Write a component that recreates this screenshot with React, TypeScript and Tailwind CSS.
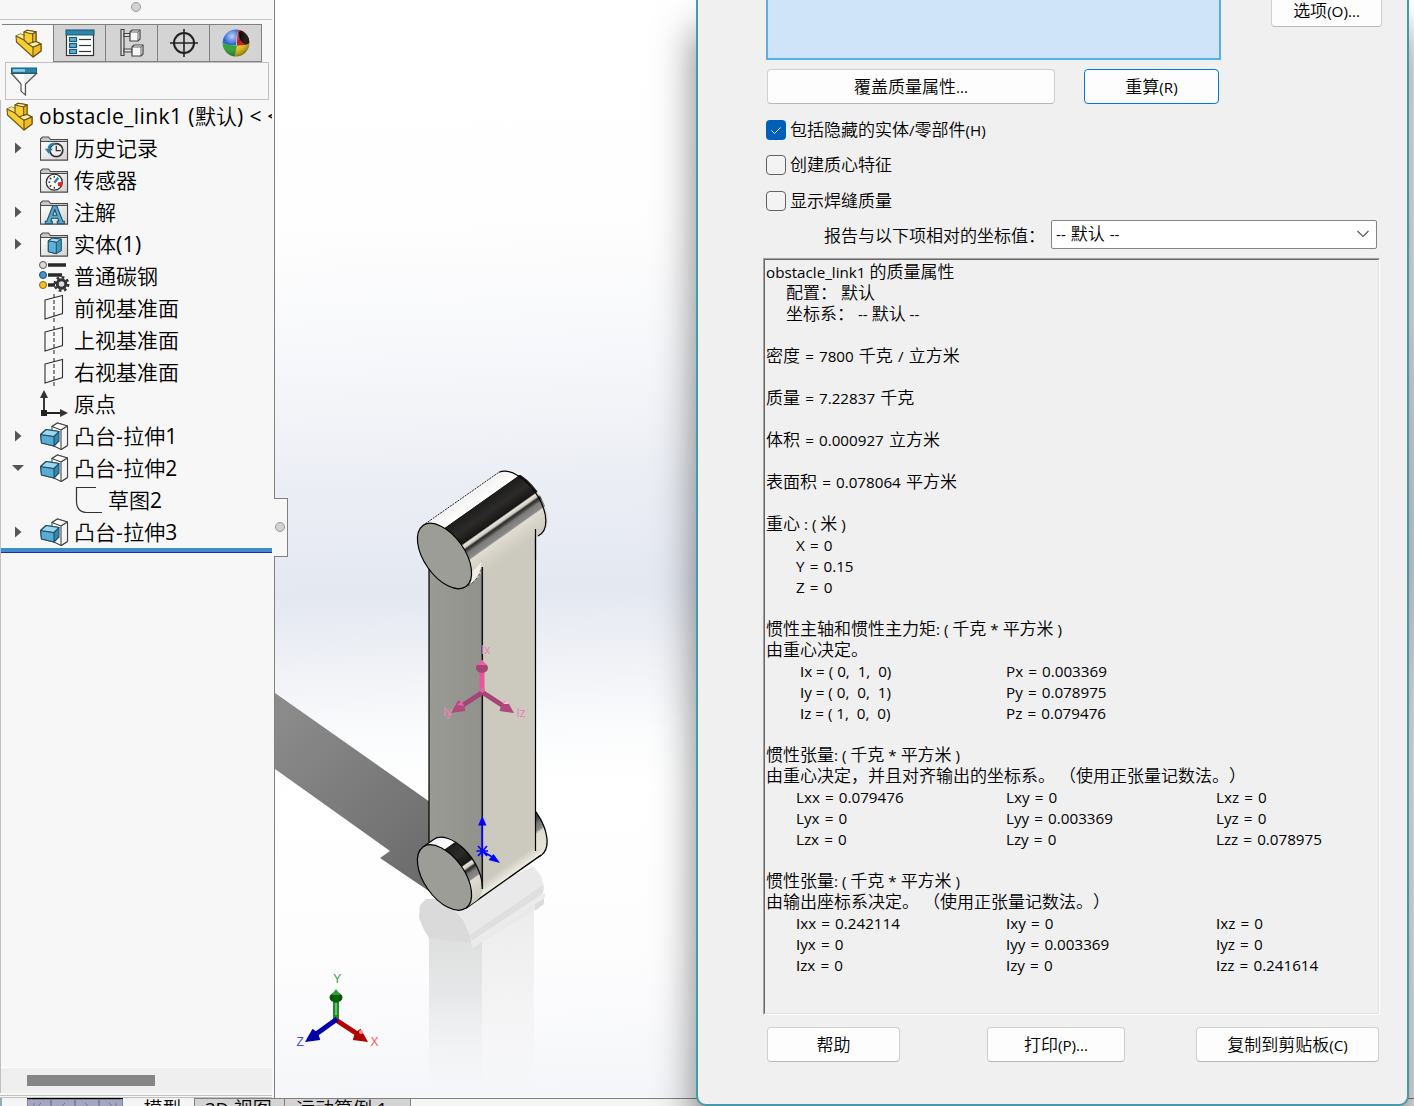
import React from "react";

const CJK = /([\u2e80-\u9fff\uff00-\uffef\u3000-\u303f]+)/;

function Plain({ children }: { children: string }) {
  return (
    <>
      {children.split(/(I)/).map((s, i) =>
        s === "I" ? <span key={i} className="font-['Liberation_Sans']">I</span> : s,
      )}
    </>
  );
}

/* Mixed-script text: Latin runs are set a little smaller than the Chinese ones. */
function Mix({ children, cjk, latin }: { children: string; cjk: string; latin: string }) {
  return (
    <>
      {children.split(CJK).map((part, i) =>
        part ? (
          <span key={i} className={i % 2 ? cjk : latin}>
            {i % 2 ? part : <Plain>{part}</Plain>}
          </span>
        ) : null,
      )}
    </>
  );
}

const UI = ({ children }: { children: string }) => (
  <span className={children.includes("=") && !children.includes("(") ? "[word-spacing:1.2px]" : ""}>
    <Mix cjk="text-[17px] font-[350]" latin="text-[15.2px]">{children}</Mix>
  </span>
);
const Tree = ({ children }: { children: string }) => (
  <Mix cjk="text-[21px] font-[350]" latin="text-[21px] tracking-[0.42px]">{children}</Mix>
);

/* ---------- icons ---------- */

function PartIcon({ className = "" }: { className?: string }) {
  return (
    <svg width="27" height="29" viewBox="-1 -1 27 29" className={className}>
      <g stroke="#6b5216" strokeWidth="1.1" strokeLinejoin="round">
        <path d="M0 6 4.500 4 8 5.500V2L11.300.200 20 1.700V11.500L25 14v7l-8 6L.500 12z" fill="#f7cf33" />
        <path d="M8 2 11.300.200 20 1.700 16.700 4z" fill="#fdf1a8" />
        <path d="M16.700 4 20 1.700v9.800l-3.300 1z" fill="#eebd25" />
        <path d="M0 6 4.500 4 8 5.500V10z" fill="#fce98c" stroke="none" />
        <path d="M12 13.800 20 11.500l5 2.500-8 3.200z" fill="#fdf1a8" />
        <path d="M17 17.200 25 14v7l-8 6z" fill="#eebd25" />
        <path d="M0 6l8 4 4 3.800M8 5v5" fill="none" />
      </g>
    </svg>
  );
}

function PropertyIcon() {
  return (
    <svg width="30" height="28" viewBox="0 0 30 28">
      <rect x="1.500" y="1.500" width="27" height="25" fill="#fff" stroke="#333" strokeWidth="1.200" />
      <rect x="1" y="1" width="28" height="5" fill="#2a86ab" stroke="#1d5873" />
      {[8.5, 14.5, 20.5].map((y) => (
        <g key={y}>
          <rect x="4.500" y={y} width="7" height="4" fill="#5fb0d3" stroke="#1d5873" strokeWidth="1.200" />
          <path d={`M14 ${y + 2}h12`} stroke="#333" strokeWidth="1.200" />
        </g>
      ))}
    </svg>
  );
}

function ConfigIcon() {
  return (
    <svg width="26" height="30" viewBox="0 0 26 30" fill="#f7f7f7" stroke="#444" strokeWidth="1.200">
      <path d="M2 1.500h3v26H2z" fill="#ddd" />
      <path d="M5 5.500h6v3H5zM5 21h8v3H5z" fill="#ddd" />
      <path d="M11 4l2-2h8v9L19 13h-8z" />
      <path d="M11 4h8v9M19 4l2-2" fill="none" strokeWidth=".8" />
      <path d="M13 19l2-2h9v9L22 28h-9z" />
      <path d="M13 19h9v9M22 19l2-2" fill="none" strokeWidth=".8" />
    </svg>
  );
}

function TargetIcon() {
  return (
    <svg width="28" height="28" viewBox="0 0 28 28" fill="none" stroke="#222">
      <circle cx="14" cy="14" r="10" strokeWidth="2" />
      <path d="M14 0v28M0 14h28" strokeWidth="1.600" />
    </svg>
  );
}

function AppearanceIcon() {
  return (
    <svg width="28" height="28" viewBox="0 0 28 28">
      <defs>
        <radialGradient id="shine" cx="0.35" cy="0.25" r="0.8">
          <stop offset="0" stopColor="#fff" stopOpacity="0.7" />
          <stop offset="0.4" stopColor="#fff" stopOpacity="0" />
          <stop offset="1" stopColor="#000" stopOpacity="0.45" />
        </radialGradient>
        <clipPath id="ball"><circle cx="14" cy="14" r="13.400" /></clipPath>
      </defs>
      <g clipPath="url(#ball)">
        <path d="M0 0h17q-3 7-3 16-7 1-14-2z" fill="#2a63cf" />
        <path d="M0 14q7 3 15 2.500L13 28H0z" fill="#27a127" />
        <path d="M15 16.500q7 0 13-3V28H12q3-6 3-11.500z" fill="#f2c711" />
        <path d="M17 0h11v14q-6 3-13 2.500Q14 7 17 0z" fill="#c6151b" />
        <ellipse cx="22" cy="8.500" rx="4.500" ry="7.500" transform="rotate(-30 22 8.500)" fill="#0c0505" />
      </g>
      <circle cx="14" cy="14" r="13.400" fill="url(#shine)" />
    </svg>
  );
}

function FilterIcon() {
  return (
    <svg width="28" height="29" viewBox="0 0 28 29">
      <path d="M1.500 6.500 11 17v7l4.500 4V17L26.500 6.500z" fill="#eee" stroke="#555" strokeWidth="1.200" />
      <path d="M5 7h9v19l-2-2v-7z" fill="#fff" />
      <rect x="1.500" y="1" width="25" height="5" fill="#2784ab" stroke="#1b5d7a" />
      <path d="M3 3.500h12" stroke="#8fd3ee" strokeWidth="2.500" />
    </svg>
  );
}

function Folder({ children }: { children: React.ReactNode }) {
  return (
    <svg width="30" height="27" viewBox="0 0 30 27">
      <defs>
        <linearGradient id="folder" x1="0" y1="0" x2="1" y2="1">
          <stop offset="0" stopColor="#fff" />
          <stop offset="1" stopColor="#d2d2d2" />
        </linearGradient>
      </defs>
      <path d="M.500 25V4L2.500 2h6l2 2.500h17V25z" fill="#c9c9c9" stroke="#4a4a4a" strokeWidth="1.100" />
      <path d="M.500 6.500h27v18.500H.500z" fill="url(#folder)" stroke="#4a4a4a" strokeWidth="1.100" />
      <g transform="translate(-.7 -.3)">{children}</g>
    </svg>
  );
}

const HistoryIcon = () => (
  <Folder>
    <circle cx="17" cy="15.500" r="6.500" fill="#eee" stroke="#333" strokeWidth="1.700" />
    <path d="M17 11v5h4.500" fill="none" stroke="#333" strokeWidth="1.300" />
    <path d="M16 9q-6 0-6.500 5" fill="none" stroke="#2a7ea3" strokeWidth="2.500" />
    <path d="M5.500 14h8l-4 5z" fill="#2a7ea3" />
  </Folder>
);
const SensorIcon = () => (
  <Folder>
    <circle cx="15" cy="15.500" r="8" fill="#fff" stroke="#333" strokeWidth="1.300" />
    <path d="M19 16h4l-1 3.500-3-.5z" fill="#d22" stroke="#d22" />
    <path d="M15 16l4-5" stroke="#2a7ea3" strokeWidth="2.200" />
    <path d="M15 9v2M9 15.500h2M10.500 11l1.500 1.500M10.500 20l1.500-1.500M15 22v-2" stroke="#333" strokeWidth="1.300" />
  </Folder>
);
const AnnotationIcon = () => (
  <Folder>
    <path
      d="M6 22.500h1.500L13.500 7h4l6 15.500H25v2.500h-7v-2.500h1.500L18.500 19.500h-6l-1 3H13V25H6zM13.500 16.500h4l-2-5.500z"
      fill="#5aa9cf"
      stroke="#1c4f69"
      strokeWidth="1.100"
    />
  </Folder>
);
const SolidIcon = () => (
  <Folder>
    <g stroke="#1c4f69" strokeLinejoin="round">
      <path d="M9 10l4-2.500 9 1V20l-5 3-8-2z" fill="#4596bd" />
      <path d="M9 10l8 1.500V23l-8-2z" fill="#5fb0d6" />
      <path d="M9 10l4-2.500 9 1-5 3z" fill="#a9dcf2" />
    </g>
  </Folder>
);

function MaterialIcon() {
  return (
    <svg width="32" height="31" viewBox="1 0 32 31">
      <path d="M10 4h18M10 14h14M10 24h7" stroke="#2a2a2a" strokeWidth="3.600" />
      <circle cx="5" cy="4" r="3.500" fill="#ddd" stroke="#555" />
      <circle cx="5" cy="14" r="3.500" fill="#3f95c0" stroke="#1c4f69" />
      <circle cx="5" cy="24" r="3.500" fill="#efc21a" stroke="#8a6a10" />
      <circle cx="23.500" cy="23" r="6.700" fill="none" stroke="#333" strokeWidth="2.500" strokeDasharray="2.700 2.560" />
      <circle cx="23.500" cy="23" r="4.300" fill="#ddd" stroke="#333" strokeWidth="3" />
    </svg>
  );
}

function PlaneIcon() {
  return (
    <svg width="30" height="30" viewBox="0 0 30 30" fill="none" stroke="#333" strokeWidth="1.100">
      <path d="M5 7 22.500 2.500v18L5 26z" />
      <path d="M14 1v29" strokeDasharray="4 2" />
    </svg>
  );
}

function OriginIcon() {
  return (
    <svg width="30" height="30" viewBox="0 0 30 30">
      <path d="M4 6v18h17" fill="none" stroke="#222" strokeWidth="1.800" />
      <path d="M4 1 8 9H0zM28 24l-8-4v8z" fill="#333" />
      <rect x="1" y="21" width="6" height="6" fill="#222" />
    </svg>
  );
}

/* White slab standing behind a blue bar that is pulled out of it. */
function ExtrudeIcon() {
  return (
    <svg width="30" height="29" viewBox="0 0 30 29" strokeLinejoin="round">
      <g stroke="#444" strokeWidth="1.100">
        <path d="M12 4.500 17.500 1l10 3v19.500L21 27.500 12 23z" fill="#fff" />
        <path d="M12 4.500 17.500 1l10 3-6.500 4z" fill="#fff" />
        <path d="M21 8 27.500 4v19.500L21 27.500z" fill="#f6f6f6" />
      </g>
      <g stroke="#1c4f69" strokeWidth="1.100">
        <path d="M.600 12.500 6 7.500l13 2V19l-5 5-12.500-3z" fill="#3686ae" />
        <path d="M.600 12.500 14 14.500V24L1.500 21z" fill="#5aabd0" />
        <path d="M.600 12.500 6 7.500l13 2-5 5z" fill="#9ed6ee" />
      </g>
    </svg>
  );
}

function SketchIcon() {
  return (
    <svg width="30" height="28" viewBox="0 0 30 28" fill="none" stroke="#333" strokeWidth="1.200">
      <path d="M21 1.500H1.500V15q0 11 10 11.500H27" />
    </svg>
  );
}

/* ---------- feature tree ---------- */

type Row = { label: string; icon: React.ReactNode; arrow?: "right" | "down"; child?: boolean };

const rows: Row[] = [
  { label: "历史记录", icon: <HistoryIcon />, arrow: "right" },
  { label: "传感器", icon: <SensorIcon /> },
  { label: "注解", icon: <AnnotationIcon />, arrow: "right" },
  { label: "实体(1)", icon: <SolidIcon />, arrow: "right" },
  { label: "普通碳钢", icon: <MaterialIcon /> },
  { label: "前视基准面", icon: <PlaneIcon /> },
  { label: "上视基准面", icon: <PlaneIcon /> },
  { label: "右视基准面", icon: <PlaneIcon /> },
  { label: "原点", icon: <OriginIcon /> },
  { label: "凸台-拉伸1", icon: <ExtrudeIcon />, arrow: "right" },
  { label: "凸台-拉伸2", icon: <ExtrudeIcon />, arrow: "down" },
  { label: "草图2", icon: <SketchIcon />, child: true },
  { label: "凸台-拉伸3", icon: <ExtrudeIcon />, arrow: "right" },
];

function FeatureTree() {
  const tabs = [<PropertyIcon />, <ConfigIcon />, <TargetIcon />, <AppearanceIcon />];
  return (
    <aside className="flex h-full w-[275px] shrink-0 flex-col border-r border-[#808080] bg-[#f7f7f7]">
      <div className="mr-[2px] flex h-5 items-start justify-center border-b border-[#c4c4c4] pt-[2px]">
        <span className="size-[10px] rounded-full border border-[#999] bg-[#d2d2d2]" />
      </div>
      <div className="mt-1 flex h-[38px]">
        <div className="ml-[2px] flex w-[51px] items-center justify-center border-t border-[#808080] pl-[2px]">
          <PartIcon />
        </div>
        {tabs.map((icon, i) => (
          <div
            key={i}
            className="flex w-[52px] items-center justify-center border-y border-l border-[#808080] bg-[#d4d4d4] last:w-[53px] last:border-r"
          >
            {icon}
          </div>
        ))}
      </div>
      <div className="mr-[5px] ml-[5px] flex h-[38px] items-center border border-[#c0c0c0] pl-1">
        <FilterIcon />
      </div>
      <div className="mr-[2px] flex flex-1 flex-col border-l border-[#c0c0c0]">
        <div className="flex h-8 items-center overflow-hidden pl-[5px]">
          <PartIcon className="shrink-0" />
          <span className="ml-[6px] pt-px leading-8 whitespace-pre">
            <Tree>{"obstacle_link1 (默认) <"}</Tree>
            <span className="text-[21px]">{" <"}</span>
          </span>
        </div>
        {rows.map((r) => (
          <div key={r.label} className="flex h-8 items-center">
            <span className="flex w-[38px] justify-start pb-px pl-[11px]">
              {r.arrow === "right" && (
                <svg width="9" height="14" viewBox="0 0 9 14" className="ml-[3px]"><path d="M0 1.500l6.500 5.500L0 12.500z" fill="#555" /></svg>
              )}
              {r.arrow === "down" && (
                <svg width="12" height="8" viewBox="0 0 12 8"><path d="M0 1h12L6 7z" fill="#555" /></svg>
              )}
            </span>
            <span className={r.child ? "ml-9 flex w-[30px] justify-center" : "flex w-8 justify-center"}>{r.icon}</span>
            <span className="ml-[3px] pt-[2px] leading-[30px] whitespace-nowrap">
              <Tree>{r.label}</Tree>
            </span>
          </div>
        ))}
        <div className="h-[5px] border-b border-[#2a2a9c] bg-[#3a8fcb]" />
        <div className="flex-1" />
        <div className="h-[26px] border-t border-white bg-[#efefef] pt-[7px] pl-[26px]">
          <div className="h-[11px] w-32 bg-[#858585]" />
        </div>
      </div>
      <div className="mt-[2px] mr-[2px] h-[3px] border-y border-[#c0c0c0]" />
    </aside>
  );
}

/* ---------- 3D viewport ---------- */

function Cone({ x, y, angle, fill, size = 1 }: { x: number; y: number; angle: number; fill: string; size?: number }) {
  return (
    <g transform={`translate(${x} ${y}) rotate(${angle}) scale(${size})`}>
      <path d="M0 0-13-6.500q-3 6.500 0 13z" fill={fill} />
    </g>
  );
}

/* End cap of a cylinder. */
const CAP = "M423 525.400A37.400 20.500 55 0 1 466 586.600A37.400 20.500 55 0 1 423 525.400z";

function Viewport() {
  return (
    <svg
      width="1139"
      height="1098"
      viewBox="275 0 1139 1098"
      className="h-[1098px] w-[1139px] shrink-0"
      fontFamily="Liberation Sans, sans-serif"
    >
      <defs>
        <linearGradient id="sky" x1="460" y1="0" x2="500" y2="1098" gradientUnits="userSpaceOnUse">
          <stop offset="0" stopColor="#fff" />
          <stop offset="0.2" stopColor="#fefefe" />
          <stop offset="0.33" stopColor="#f6f7fa" />
          <stop offset="0.45" stopColor="#eaedf4" />
          <stop offset="0.54" stopColor="#e4e8f1" />
          <stop offset="0.6" stopColor="#eff1f6" />
          <stop offset="0.67" stopColor="#fbfcfd" />
          <stop offset="0.72" stopColor="#fff" />
          <stop offset="0.87" stopColor="#fdfdfe" />
          <stop offset="1" stopColor="#f5f6f9" />
        </linearGradient>
        <linearGradient id="shadow" x1="275" y1="720" x2="430" y2="870" gradientUnits="userSpaceOnUse">
          <stop offset="0" stopColor="#8b8b8c" />
          <stop offset="1" stopColor="#6c6c6c" />
        </linearGradient>
        <linearGradient id="chrome" x1="390" y1="552.3" x2="430.400" y2="609.500" gradientUnits="userSpaceOnUse">
          <stop offset="0" stopColor="#f4f4f4" />
          <stop offset="0.16" stopColor="#fff" />
          <stop offset="0.17" stopColor="#1d1d1c" />
          <stop offset="0.35" stopColor="#2c2b2a" />
          <stop offset="0.5" stopColor="#161615" />
          <stop offset="0.52" stopColor="#e8e4dc" />
          <stop offset="0.56" stopColor="#cfccc4" />
          <stop offset="0.59" stopColor="#2a2a28" />
          <stop offset="0.62" stopColor="#4a4a48" />
          <stop offset="0.65" stopColor="#7b7b7a" />
          <stop offset="0.73" stopColor="#8b8a88" />
          <stop offset="0.75" stopColor="#e0ddd3" />
          <stop offset="0.82" stopColor="#dad6cb" />
          <stop offset="1" stopColor="#cdcabf" />
        </linearGradient>
        <linearGradient id="leftFace" x1="429" y1="0" x2="482" y2="0" gradientUnits="userSpaceOnUse">
          <stop offset="0" stopColor="#9b9b95" />
          <stop offset="1" stopColor="#92928c" />
        </linearGradient>
        <linearGradient id="foot" x1="503" y1="868" x2="510" y2="878" gradientUnits="userSpaceOnUse">
          <stop offset="0" stopColor="#ccc9be" />
          <stop offset="1" stopColor="#f4f2ea" />
        </linearGradient>
        <linearGradient id="mirrorL" x1="0" y1="900" x2="0" y2="1090" gradientUnits="userSpaceOnUse">
          <stop offset="0" stopColor="#dadada" />
          <stop offset="0.5" stopColor="#e6e7e8" />
          <stop offset="1" stopColor="#eceef0" stopOpacity="0" />
        </linearGradient>
        <linearGradient id="mirrorR" x1="0" y1="900" x2="0" y2="1090" gradientUnits="userSpaceOnUse">
          <stop offset="0" stopColor="#ececec" />
          <stop offset="0.5" stopColor="#f3f3f4" />
          <stop offset="1" stopColor="#f3f3f4" stopOpacity="0" />
        </linearGradient>
        <linearGradient id="lowerChrome" x1="390" y1="552.3" x2="430.400" y2="609.500" gradientUnits="userSpaceOnUse">
          <stop offset="0" stopColor="#222" />
          <stop offset="0.4" stopColor="#2c2b2a" />
          <stop offset="0.5" stopColor="#555" />
          <stop offset="0.54" stopColor="#3a3a38" />
          <stop offset="0.62" stopColor="#777" />
          <stop offset="0.7" stopColor="#8b8a88" />
          <stop offset="0.74" stopColor="#e0ddd3" />
          <stop offset="1" stopColor="#e6e3d9" />
        </linearGradient>
      </defs>

      <rect x="275" width="1139" height="1098" fill="url(#sky)" />

      {/* cast shadow */}
      <path d="M275 693 430 802l30 106h-6L380 858l10-7L275 769z" fill="url(#shadow)" />

      {/* floor reflection */}
      <path d="M429 905h53v185h-53z" fill="url(#mirrorL)" />
      <path d="M482 900h52v190h-52z" fill="url(#mirrorR)" />
      <path d="M420 905 426 899H460L471 920 474 940 482 944 429 938 424 930 419 918z" fill="#dadada" />
      <path d="M450 906 533 866 541 876 544 886V890L534 911 472 948 470 936 463 920z" fill="#e9e9e9" />
      <path d="M470 935 543 885V893L472 941z" fill="#dfdfdf" />
      <path d="M471 941 545 893v4L473 948z" fill="#ebebeb" />
      <path d="M535 904 544 898v6l-9 7z" fill="#dcdcdc" />

      {/* far end of the lower cylinder */}
      <g transform="translate(75.5 268.500)">
        <path d={CAP} fill="url(#lowerChrome)" stroke="#000" strokeWidth="1.300" />
      </g>

      {/* link body */}
      <path d="M429 550 482 530V889L470 900 429 850z" fill="url(#leftFace)" />
      <path d="M482 540 535.500 515V851L482 889z" fill="#ccc9be" />
      <path d="M466 908.100 476 880 482 883 536 845V850L545 847 541 855.100z" fill="url(#foot)" />
      <path d="M541 855.100 466 908.100" stroke="#000" strokeWidth="1.300" />
      <path d="M429 562V842M535.500 529V851" stroke="#000" strokeWidth="1.200" />

      {/* near end of the lower cylinder */}
      <g transform="translate(0 321.500)">
        <path d="M423 525.400 433.600 517.900A37.400 20.500 55 0 1 476.600 579.100L466 586.600z" fill="url(#chrome)" />
        <path d="M423 525.400 433.600 517.900A37.400 20.500 55 0 1 482.300 565" fill="none" stroke="#000" strokeWidth="1.200" />
        <path d={CAP} fill="#9d9d97" stroke="#000" strokeWidth="1.200" />
      </g>

      {/* upper cylinder */}
      <path d="M423 525.400 499 472.200A37.400 20.500 55 0 1 542 533.400L482 575.300V560L445 556z" fill="url(#chrome)" />
      <path d="M423 525.400 433.600 517.900A37.400 20.500 55 0 1 476.600 579.100L466 586.600z" fill="url(#chrome)" />
      <path d="M471 584 472 572 481.500 562Q481 574 471 584z" fill="#efede6" />
      <path d="M481.500 569Q479 579 468 586" fill="none" stroke="#333" strokeWidth=".8" strokeDasharray="3 2" />
      <path d="M423 525.400 499 472.200" stroke="#222" strokeDasharray="2 1" />
      <path d="M499 472.200A37.400 20.500 55 0 1 538 536" fill="none" stroke="#000" strokeWidth="1.200" />
      <path d="M535.500 529V560" stroke="#000" strokeWidth="1.200" />
      <path d="M482.300 567V889" stroke="#111" strokeWidth="1.500" />
      <path d={CAP} fill="#9d9d97" stroke="#000" strokeWidth="1.200" />

      {/* principal inertia triad */}
      <g fontSize="12" fill="#ee85b8">
        <path d="M482 692V672" stroke="#e8559c" strokeWidth="5" />
        <path d="M483 692 460 707M482 692 505 707" stroke="#a54475" strokeWidth="5" />
        <ellipse cx="482" cy="668" rx="6" ry="5" fill="#a54475" />
        <path d="M477.500 665 482 659.500l4.500 5.500z" fill="#ee5fa5" />
        <Cone x={451} y={713} angle={146} fill="#b0497d" />
        <Cone x={514} y={713} angle={34} fill="#b0497d" />
        <path d="M457 705l5-4 2 5z" fill="#ee5fa5" />
        <path d="M503 704l4-4 2 4z" fill="#f9c5df" />
        <circle cx="482.500" cy="690" r="2.500" fill="#d66a9f" />
        <text x="481" y="654">Ix</text>
        <text x="443" y="716">Iy</text>
        <text x="516.500" y="717">Iz</text>
      </g>

      {/* origin marker */}
      <g stroke="#0000ff" strokeWidth="1.600" fill="#0000ff">
        <path d="M482.300 857V822M476.500 851h11.500M478 846l9 10M487 846l-9 10M482 851l12 7" fill="none" />
        <path d="M482.300 816l4.200 9.500h-8.400zM500 863l-6.500-9-5 6z" stroke="none" />
      </g>

      {/* view triad */}
      <g fontSize="12">
        <path d="M336 1020V1000" stroke="#1f8a2a" strokeWidth="6" />
        <path d="M336 1015V1003" stroke="#7fd487" strokeWidth="1.500" />
        <path d="M336 1020 362 1037" stroke="#b30000" strokeWidth="5" />
        <path d="M337 1019 312 1037" stroke="#0000aa" strokeWidth="5" />
        <ellipse cx="336" cy="997.500" rx="6.500" ry="5" fill="#005c00" />
        <path d="M331.500 995 336 989l4.500 6z" fill="#2f9e38" />
        <Cone x={305} y={1042} angle={146} fill="#0000a8" size={1.05} />
        <Cone x={368} y={1042} angle={34} fill="#b00000" size={1.05} />
        <circle cx="361" cy="1032" r="2" fill="#ff9a9a" />
        <text x="333.300" y="982.500" fill="#3f9a45">Y</text>
        <text x="370.500" y="1046" fill="#ff5a5a">X</text>
        <text x="296.500" y="1046" fill="#4a4ae0">Z</text>
      </g>
    </svg>
  );
}

function PanelHandle() {
  return (
    <div className="absolute top-[498px] left-[274px] flex h-[59px] w-[14px] items-center justify-center border border-l-0 border-[#808080] bg-[#f7f7f7] pr-[2px] pb-[2px]">
      <span className="size-[10px] shrink-0 rounded-full border border-[#999] bg-[#d2d2d2]" />
    </div>
  );
}

/* ---------- bottom tab strip ---------- */

function BottomTabs() {
  return (
    <footer className="flex h-2 w-full overflow-hidden bg-[#f5f5f5]">
      <div className="w-[27px] border-l-2 border-[#8fb0b8]" />
      <div className="flex w-24 border-t border-black">
        {[0, 1, 2, 3].map((i) => (
          <div key={i} className="flex w-6 items-start justify-center border border-b-0 border-[#80839c] bg-[#a4a7bf]">
            <svg width="12" height="7" viewBox="0 0 12 7" stroke="#777a92" fill="none">
              <path d={i < 2 ? "M8 3 3 8" : "M4 3l5 5"} />
              {i === 0 && <path d="M1 3v6" />}
              {i === 3 && <path d="M11 3v6" />}
            </svg>
          </div>
        ))}
      </div>
      <div className="flex w-[71px] justify-center pl-2 text-[19px] leading-[22px] font-[350]">模型</div>
      <div className="w-[90px] border-t border-l border-[#808080] bg-[#d4d4d4] pl-[10px] leading-[20px] whitespace-nowrap">
        <Mix cjk="text-[19px] font-[350]" latin="text-[18.5px]">{"3D 视图"}</Mix>
      </div>
      <div className="w-[127px] border-x border-t border-[#808080] bg-[#d4d4d4] pl-[11px] leading-[20px] whitespace-nowrap">
        <Mix cjk="text-[19px] font-[350]" latin="text-[18.5px]">{"运动算例 1"}</Mix>
      </div>
      <div className="flex-1 border-t border-[#808080]" />
    </footer>
  );
}

/* ---------- mass properties dialog ---------- */

function Button({ children, className }: { children: string; className: string }) {
  return (
    <button
      className={`flex h-[35px] items-center justify-center rounded-[4px] border bg-[#fdfdfd] leading-[20px] whitespace-nowrap ${className}`}
    >
      <span><UI>{children}</UI></span>
    </button>
  );
}

function Check({ label, on, className }: { label: string; on?: boolean; className: string }) {
  return (
    <label className={`ml-[68px] flex h-5 items-center gap-1 ${className}`}>
      {on ? (
        <span className="flex size-5 items-center justify-center rounded-[4px] bg-[#005fb8]">
          <svg width="12" height="9" viewBox="0 0 12 9" fill="none" stroke="#fff"><path d="M1.500 4.500 4.500 7.500 10.500 1.500" /></svg>
        </span>
      ) : (
        <span className="size-5 rounded-[4px] border border-[#626262] bg-[#f3f3f3]" />
      )}
      <span className="leading-5"><UI>{label}</UI></span>
    </label>
  );
}

type Line = { text?: string; indent?: boolean; cols?: string[] };

const report: Line[] = [
  { text: "obstacle_link1 的质量属性" },
  { text: "配置： 默认", indent: true },
  { text: "坐标系： -- 默认 --", indent: true },
  {},
  { text: "密度 = 7800 千克 / 立方米" },
  {},
  { text: "质量 = 7.22837 千克" },
  {},
  { text: "体积 = 0.000927 立方米" },
  {},
  { text: "表面积 = 0.078064 平方米" },
  {},
  { text: "重心 : ( 米 )" },
  { cols: ["X = 0"] },
  { cols: ["Y = 0.15"] },
  { cols: ["Z = 0"] },
  {},
  { text: "惯性主轴和惯性主力矩: ( 千克 * 平方米 )" },
  { text: "由重心决定。" },
  { cols: [" Ix = ( 0,  1,  0)", "Px = 0.003369"] },
  { cols: [" Iy = ( 0,  0,  1)", "Py = 0.078975"] },
  { cols: [" Iz = ( 1,  0,  0)", "Pz = 0.079476"] },
  {},
  { text: "惯性张量: ( 千克 * 平方米 )" },
  { text: "由重心决定，并且对齐输出的坐标系。 （使用正张量记数法。）" },
  { cols: ["Lxx = 0.079476", "Lxy = 0", "Lxz = 0"] },
  { cols: ["Lyx = 0", "Lyy = 0.003369", "Lyz = 0"] },
  { cols: ["Lzx = 0", "Lzy = 0", "Lzz = 0.078975"] },
  {},
  { text: "惯性张量: ( 千克 * 平方米 )" },
  { text: "由输出座标系决定。 （使用正张量记数法。）" },
  { cols: ["Ixx = 0.242114", "Ixy = 0", "Ixz = 0"] },
  { cols: ["Iyx = 0", "Iyy = 0.003369", "Iyz = 0"] },
  { cols: ["Izx = 0", "Izy = 0", "Izz = 0.241614"] },
];

function Dialog() {
  return (
    <section className="absolute top-0 left-[696px] flex h-[1106px] w-[713px] flex-col rounded-b-[10px] border-x-2 border-b-2 border-[#4699ab] bg-[#f0f0f0] shadow-[0_30px_40px_0_rgba(0,0,0,0.5)]">
      <div className="ml-[68px] flex h-[60px] items-start">
        <div className="h-[60px] w-[455px] border-2 border-t-0 border-[#56b0e6] bg-[#cfe4f8]" />
        <div className="ml-[50px] flex h-[27px] w-[111px] items-center justify-center rounded-b-[4px] border border-t-0 border-[#cfcfcf] border-b-[#b8b8b8] bg-[#fdfdfd] pb-1 leading-5">
          <span><UI>选项(O)...</UI></span>
        </div>
      </div>
      <div className="mt-[9px] ml-[69px] flex">
        <Button className="w-72 border-[#cfcfcf] border-b-[#b8b8b8]">覆盖质量属性...</Button>
        <Button className="ml-[29px] w-[135px] border-[#0078d4]">重算(R)</Button>
      </div>
      <Check on label="包括隐藏的实体/零部件(H)" className="mt-4" />
      <Check label="创建质心特征" className="mt-[15px]" />
      <Check label="显示焊缝质量" className="mt-4" />
      <div className="mt-[9px] ml-[126px] flex h-[29px] items-center">
        <span className="w-[227px] pt-[2px] leading-5 whitespace-nowrap"><UI>报告与以下项相对的坐标值：</UI></span>
        <div className="flex h-[29px] w-[326px] items-center justify-between rounded-[2px] border border-[#858585] bg-white pr-[7px] pb-px pl-1">
          <span className="leading-5 [word-spacing:1px]"><UI>-- 默认 --</UI></span>
          <svg width="12" height="8" viewBox="0 0 12 8" fill="none" stroke="#555" strokeWidth="1.100"><path d="M.5 1 6 6.500 11.500 1" /></svg>
        </div>
      </div>
      <div className="mt-[9px] ml-[65px] h-[757px] w-[617px] border border-t-[#a0a0a0] border-r-white border-b-white border-l-[#a0a0a0]">
        <div className="h-full border border-t-[#696969] border-r-[#e3e3e3] border-b-[#e3e3e3] border-l-[#696969] pt-px pl-px [text-spacing-trim:space-all]">
          {report.map((l, i) => (
            <div key={i} className={`flex h-[21px] leading-[21px] whitespace-pre ${l.indent ? "pl-5" : ""}`}>
              {l.text && <span><UI>{l.text}</UI></span>}
              {l.cols && (
                <div className="grid grid-cols-[210px_210px_1fr] pt-px pl-[30px]">
                  {l.cols.map((c) => <span key={c}><UI>{c}</UI></span>)}
                </div>
              )}
            </div>
          ))}
        </div>
      </div>
      <div className="mt-3 ml-[69px] flex">
        <Button className="w-[133px] border-[#cfcfcf] border-b-[#b8b8b8]">帮助</Button>
        <Button className="ml-[87px] w-[138px] border-[#cfcfcf] border-b-[#b8b8b8]">打印(P)...</Button>
        <Button className="ml-[71px] w-[183px] border-[#cfcfcf] border-b-[#b8b8b8]">复制到剪贴板(C)</Button>
      </div>
    </section>
  );
}

export default function App() {
  return (
    <div className="relative flex h-[1106px] w-[1414px] flex-col overflow-hidden bg-white font-['Open_Sans','Noto_Sans_CJK_SC',sans-serif] text-black">
      <main className="flex h-[1098px]">
        <FeatureTree />
        <Viewport />
      </main>
      <BottomTabs />
      <PanelHandle />
      <Dialog />
    </div>
  );
}
